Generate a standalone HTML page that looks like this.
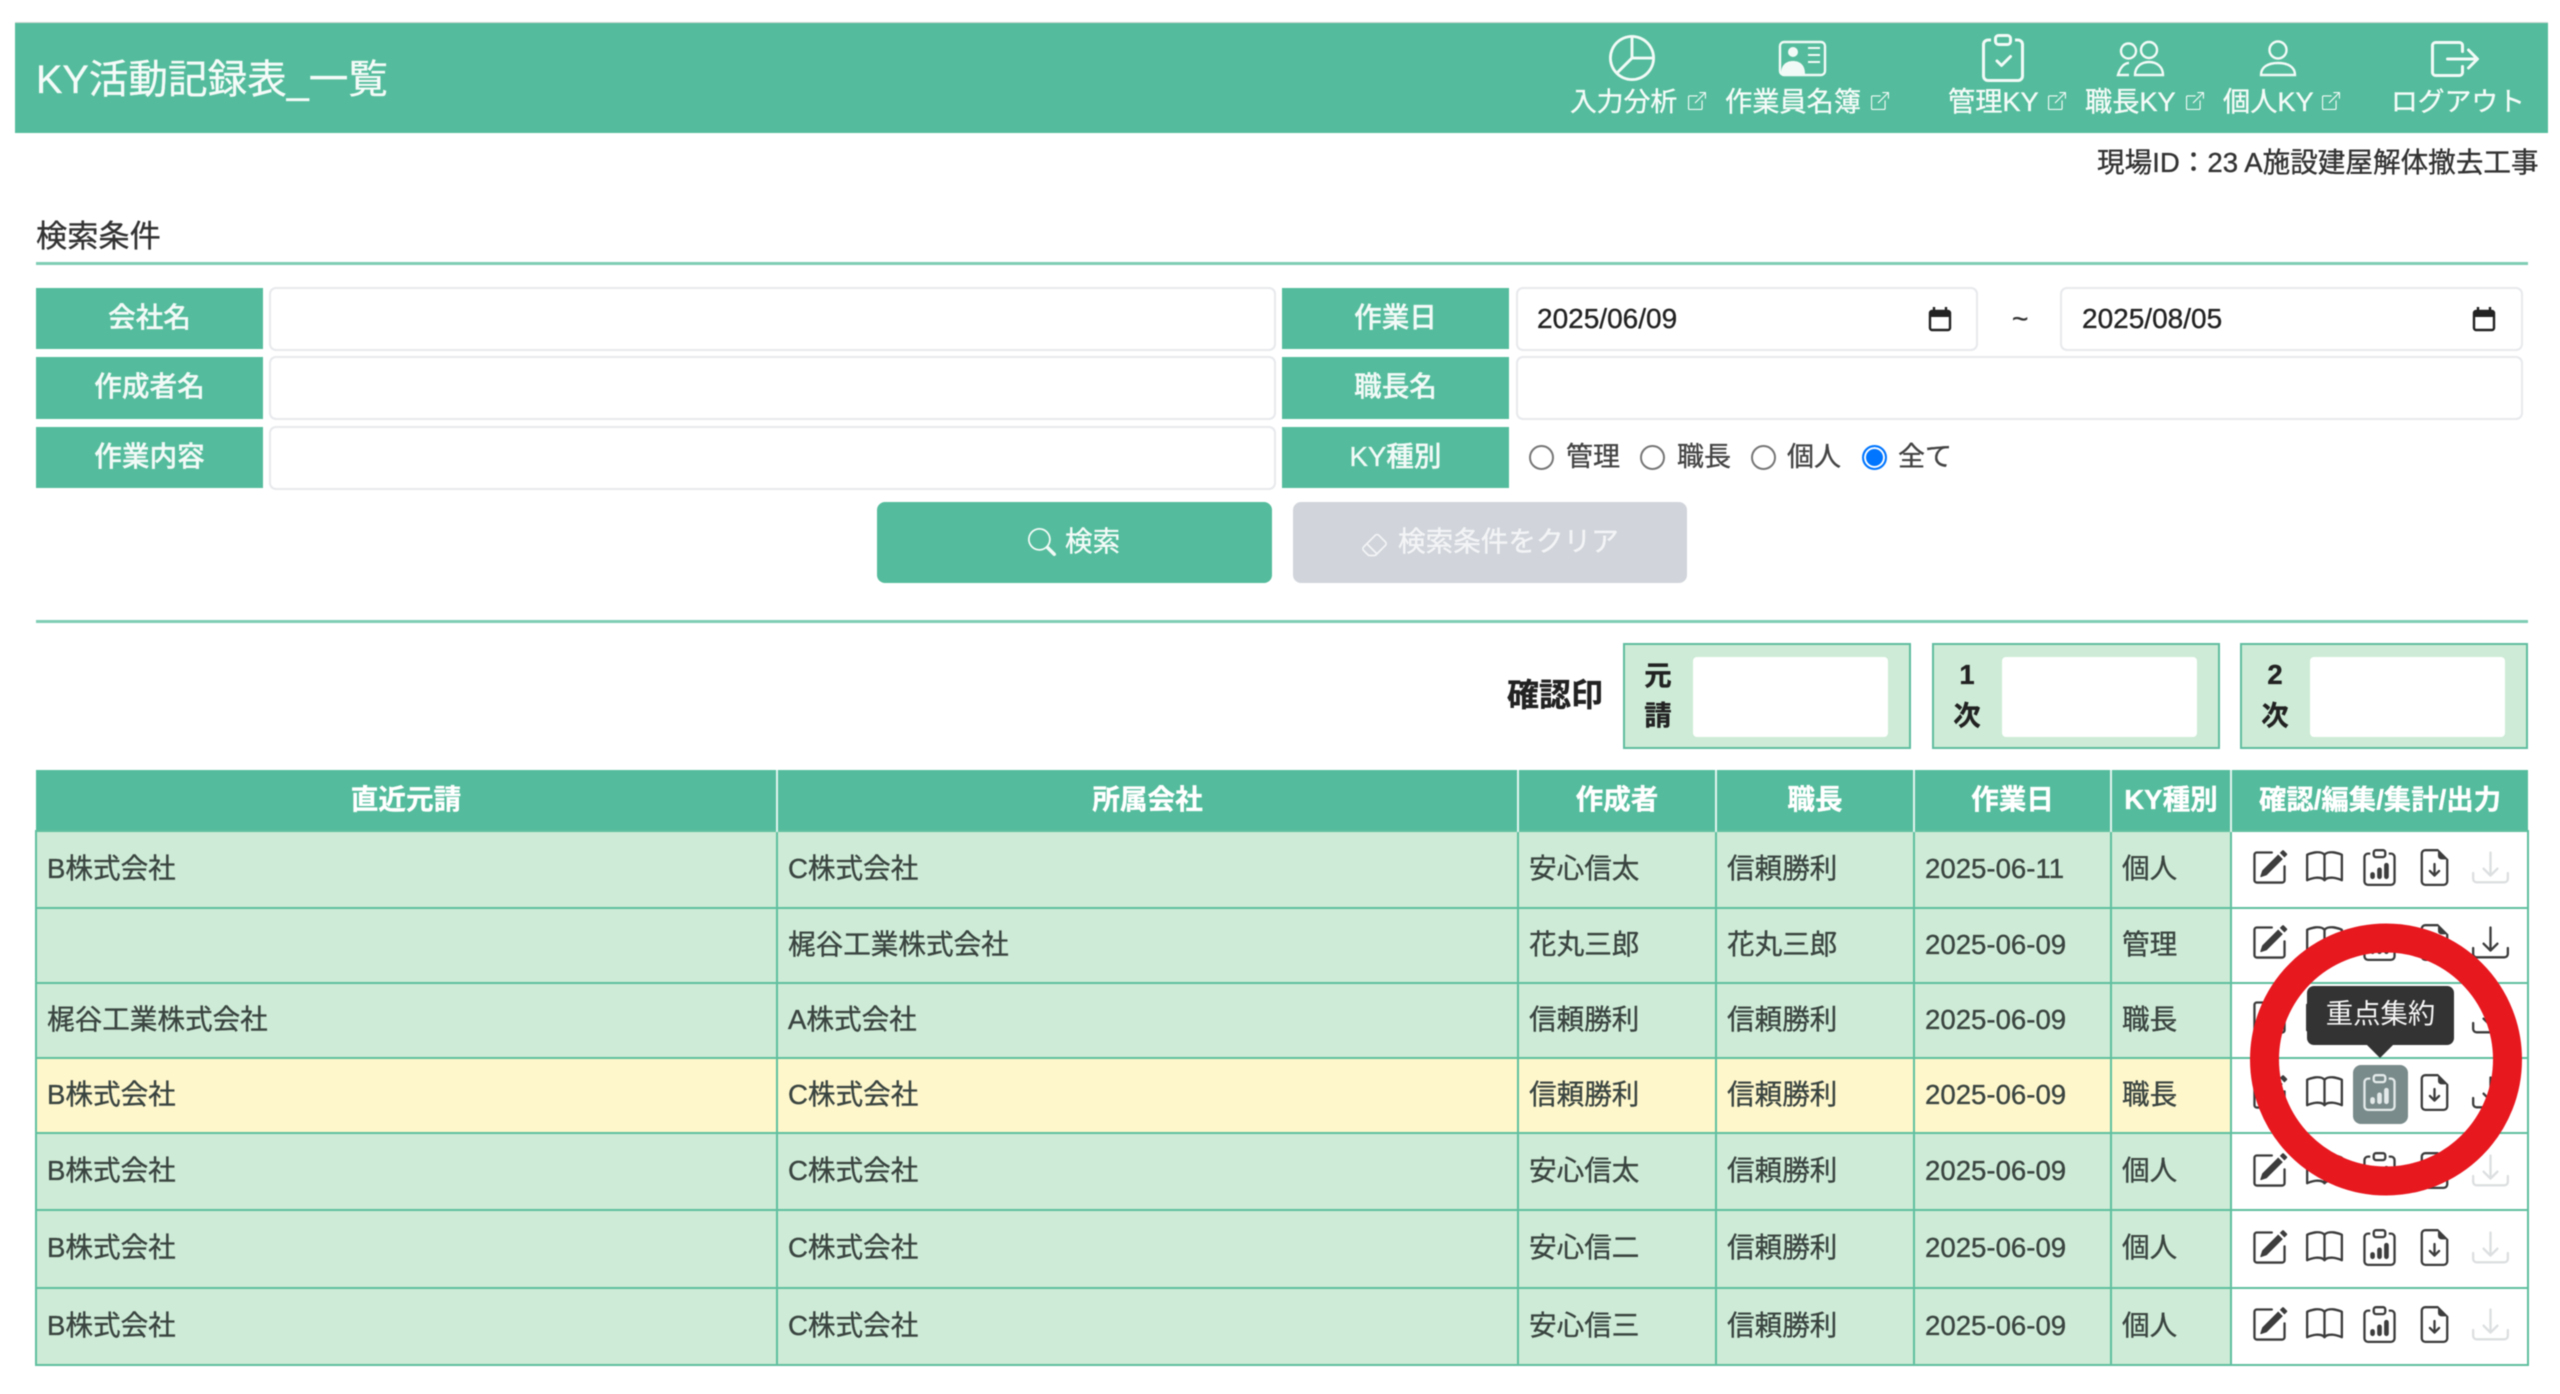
<!DOCTYPE html>
<html lang="ja"><head><meta charset="utf-8"><title>KY活動記録表_一覧</title>
<style>
html,body{margin:0;padding:0;background:#fff}
#p{position:relative;width:2560px;height:1394px;overflow:hidden;background:#fff;font-family:"Liberation Sans","Noto Sans CJK JP",sans-serif;font-size:27.6px;color:#333;-webkit-text-stroke:.35px currentColor;filter:blur(.4px)}
.a{position:absolute}
.t{position:absolute;white-space:nowrap;line-height:40px;height:40px}
.w{color:#f4fbf8}
.l{position:absolute;background:#54bc9c;color:#f2faf7;text-align:center;width:227px;height:61px;line-height:59px;font-weight:500}
.i{position:absolute;box-sizing:border-box;background:#fff;border:2.5px solid #e7e9ec;border-radius:7px}
.hr{position:absolute;left:36px;width:2492px;height:3px;background:#7fcdb5}
.r{position:absolute;box-sizing:border-box;width:25px;height:25px;border:2px solid #767676;border-radius:50%;background:#fff;top:445px}
.c{position:absolute;box-sizing:border-box;top:643px;width:288px;height:106px;background:#cdebd6;border:2px solid #5fbd9f}
.c i{position:absolute;left:68px;top:12px;width:195px;height:80px;background:#fff;border-radius:4px}
.c b{position:absolute;left:16px;width:34px;text-align:center;font-size:27.4px;line-height:40px;color:#222}
table{position:absolute;left:35px;top:770px;border-collapse:collapse;table-layout:fixed;width:2492px;line-height:40px}
th{background:#54bc9c;color:#fff;font-weight:700;padding:0;border:none;border-right:2px solid #e2f4ee;height:60px;text-align:center}
th:last-child{border-right:none}
td{background:#cdebd6;border:2px solid #5fbf9f;padding:0 0 2px 10px;color:#3a4440;white-space:nowrap}
tr.y td{background:#fef7cc}
td.o,tr.y td.o{background:#fff}
</style></head><body><div id="p">

<div class="a" style="left:15px;top:23px;width:2533px;height:110px;background:#54bc9c;box-shadow:0 -1px 0 #cfd8d4"></div>
<div class="t w" style="left:36px;top:60px;font-size:39.6px">KY活動記録表_一覧</div>

<div class="t w" style="left:1570px;top:82px;font-size:26.8px">入力分析</div>
<div class="t w" style="left:1725px;top:82px;font-size:27.2px">作業員名簿</div>
<div class="t w" style="left:1948px;top:82px;font-size:27.2px">管理KY</div>
<div class="t w" style="left:2085px;top:82px;font-size:27.2px">職長KY</div>
<div class="t w" style="left:2223px;top:82px;font-size:27.2px">個人KY</div>
<div class="t w" style="left:2391px;top:82px;font-size:26.8px">ログアウト</div>

<div class="t" style="left:2097px;top:143px;color:#333;font-size:27.6px">現場ID：23 A施設建屋解体撤去工事</div>

<div class="t" style="left:36px;top:217px;font-size:31.2px;color:#333">検索条件</div>
<div class="hr" style="top:262px"></div>

<div class="l" style="left:36px;top:288px">会社名</div>
<div class="l" style="left:36px;top:357px;height:62px">作成者名</div>
<div class="l" style="left:36px;top:427px">作業内容</div>
<div class="i" style="left:269px;top:287px;width:1007px;height:64px"></div>
<div class="i" style="left:269px;top:356px;width:1007px;height:64px"></div>
<div class="i" style="left:269px;top:426px;width:1007px;height:64px"></div>

<div class="l" style="left:1282px;top:288px">作業日</div>
<div class="l" style="left:1282px;top:357px;height:62px">職長名</div>
<div class="l" style="left:1282px;top:427px">KY種別</div>
<div class="i" style="left:1516px;top:287px;width:462px;height:64px"></div>
<div class="t" style="left:1537px;top:299px;font-size:28px;color:#222">2025/06/09</div>
<div class="t" style="left:2012px;top:299px;font-size:28px;color:#333">~</div>
<div class="i" style="left:2060px;top:287px;width:463px;height:64px"></div>
<div class="t" style="left:2082px;top:299px;font-size:28px;color:#222">2025/08/05</div>
<div class="i" style="left:1516px;top:356px;width:1007px;height:64px"></div>

<div class="r" style="left:1529px"></div><div class="t" style="left:1566px;top:437px;font-size:27px;color:#444">管理</div>
<div class="r" style="left:1640px"></div><div class="t" style="left:1677px;top:437px;font-size:27px;color:#444">職長</div>
<div class="r" style="left:1751px"></div><div class="t" style="left:1787px;top:437px;font-size:27px;color:#444">個人</div>
<div class="r" style="left:1862px;border-color:#0075ff;box-shadow:inset 0 0 0 2px #fff;background:#0075ff"></div><div class="t" style="left:1898px;top:437px;font-size:27px;color:#444">全て</div>

<div class="a" style="left:877px;top:502px;width:395px;height:81px;background:#54bc9c;border-radius:8px"></div>
<div class="t w" style="left:1065px;top:522px;font-size:27.6px">検索</div>
<div class="a" style="left:1293px;top:502px;width:394px;height:81px;background:#d1d5db;border-radius:8px"></div>
<div class="t" style="left:1398px;top:522px;font-size:27.6px;color:#f3f4f6">検索条件をクリア</div>

<div class="hr" style="top:620px"></div>

<div class="t" style="left:1507px;top:675px;font-size:32px;font-weight:700;color:#222">確認印</div>
<div class="c" style="left:1623px"><i></i><b style="top:11px">元</b><b style="top:51px">請</b></div>
<div class="c" style="left:1932px"><i></i><b style="top:10px">1</b><b style="top:51px">次</b></div>
<div class="c" style="left:2240px"><i></i><b style="top:10px">2</b><b style="top:51px">次</b></div>

<table>
<colgroup><col style="width:741px"><col style="width:741px"><col style="width:198px"><col style="width:198px"><col style="width:197px"><col style="width:120px"><col style="width:297px"></colgroup>
<tr><th>直近元請</th><th>所属会社</th><th>作成者</th><th>職長</th><th>作業日</th><th>KY種別</th><th style="font-size:27.4px">確認/編集/集計/出力</th></tr>
<tr style="height:77px"><td>B株式会社</td><td>C株式会社</td><td>安心信太</td><td>信頼勝利</td><td>2025-06-11</td><td>個人</td><td class="o"></td></tr>
<tr style="height:75px"><td></td><td>梶谷工業株式会社</td><td>花丸三郎</td><td>花丸三郎</td><td>2025-06-09</td><td>管理</td><td class="o"></td></tr>
<tr style="height:75px"><td>梶谷工業株式会社</td><td>A株式会社</td><td>信頼勝利</td><td>信頼勝利</td><td>2025-06-09</td><td>職長</td><td class="o"></td></tr>
<tr class="y" style="height:75px"><td>B株式会社</td><td>C株式会社</td><td>信頼勝利</td><td>信頼勝利</td><td>2025-06-09</td><td>職長</td><td class="o"></td></tr>
<tr style="height:77px"><td>B株式会社</td><td>C株式会社</td><td>安心信太</td><td>信頼勝利</td><td>2025-06-09</td><td>個人</td><td class="o"></td></tr>
<tr style="height:78px"><td>B株式会社</td><td>C株式会社</td><td>安心信二</td><td>信頼勝利</td><td>2025-06-09</td><td>個人</td><td class="o"></td></tr>
<tr style="height:77px"><td>B株式会社</td><td>C株式会社</td><td>安心信三</td><td>信頼勝利</td><td>2025-06-09</td><td>個人</td><td class="o"></td></tr>
</table>

<svg class="a" style="left:0;top:0" width="2560" height="1394" viewBox="0 0 2560 1394" xmlns="http://www.w3.org/2000/svg">
<defs>
<symbol id="edit" viewBox="0 0 16 16"><path d="M15.502 1.94a.5.5 0 0 1 0 .706L14.459 3.69l-2-2L13.502.646a.5.5 0 0 1 .707 0l1.293 1.293zm-1.75 2.456-2-2L4.939 9.21a.5.5 0 0 0-.121.196l-.805 2.414a.25.25 0 0 0 .316.316l2.414-.805a.5.5 0 0 0 .196-.12l6.813-6.814z"/><path d="M1 13.5A1.5 1.5 0 0 0 2.5 15h11a1.5 1.5 0 0 0 1.5-1.5v-6a.5.5 0 0 0-1 0v6a.5.5 0 0 1-.5.5h-11a.5.5 0 0 1-.5-.5v-11a.5.5 0 0 1 .5-.5H9a.5.5 0 0 0 0-1H2.5A1.5 1.5 0 0 0 1 2.5v11z"/></symbol>
<symbol id="book" viewBox="0 0 16 16"><path d="M1 2.828c.885-.37 2.154-.769 3.388-.893 1.33-.134 2.458.063 3.112.752v9.746c-.935-.53-2.12-.603-3.213-.493-1.18.12-2.37.461-3.287.811V2.828zm7.5-.141c.654-.689 1.782-.886 3.112-.752 1.234.124 2.503.523 3.388.893v9.923c-.918-.35-2.107-.692-3.287-.81-1.094-.111-2.278-.039-3.213.492V2.687zM8 1.783C7.015.936 5.587.81 4.287.94c-1.514.153-3.042.672-3.994 1.105A.5.5 0 0 0 0 2.5v11a.5.5 0 0 0 .707.455c.882-.4 2.303-.881 3.68-1.02 1.409-.142 2.59.087 3.223.877a.5.5 0 0 0 .78 0c.633-.79 1.814-1.019 3.222-.877 1.378.139 2.8.62 3.681 1.02A.5.5 0 0 0 16 13.5v-11a.5.5 0 0 0-.293-.455c-.952-.433-2.48-.952-3.994-1.105C10.413.809 8.985.936 8 1.783z"/></symbol>
<symbol id="clipb" viewBox="0 0 16 16"><path d="M4 1.5H3a2 2 0 0 0-2 2V14a2 2 0 0 0 2 2h10a2 2 0 0 0 2-2V3.5a2 2 0 0 0-2-2h-1v1h1a1 1 0 0 1 1 1V14a1 1 0 0 1-1 1H3a1 1 0 0 1-1-1V3.5a1 1 0 0 1 1-1h1v-1z"/><path d="M9.5 1a.5.5 0 0 1 .5.5v1a.5.5 0 0 1-.5.5h-3a.5.5 0 0 1-.5-.5v-1a.5.5 0 0 1 .5-.5h3zm-3-1A1.5 1.5 0 0 0 5 1.5v1A1.5 1.5 0 0 0 6.5 4h3A1.5 1.5 0 0 0 11 2.5v-1A1.5 1.5 0 0 0 9.5 0h-3z"/></symbol>
<symbol id="data" viewBox="0 0 16 16"><use href="#clipb"/><path d="M4 11a1 1 0 1 1 2 0v1a1 1 0 1 1-2 0v-1zm6-4a1 1 0 1 1 2 0v5a1 1 0 1 1-2 0V7zM7 9a1 1 0 0 1 2 0v3a1 1 0 1 1-2 0V9z"/></symbol>
<symbol id="file" viewBox="0 0 16 16"><path d="M8.5 6.5a.5.5 0 0 0-1 0v3.793L6.354 9.146a.5.5 0 1 0-.708.708l2 2a.5.5 0 0 0 .708 0l2-2a.5.5 0 0 0-.708-.708L8.5 10.293V6.5z"/><path d="M14 14V4.5L9.5 0H4a2 2 0 0 0-2 2v12a2 2 0 0 0 2 2h8a2 2 0 0 0 2-2zM9.5 3A1.5 1.5 0 0 0 11 4.5h2V14a1 1 0 0 1-1 1H4a1 1 0 0 1-1-1V2a1 1 0 0 1 1-1h5.5v2z"/></symbol>
<symbol id="dl" viewBox="0 0 16 16"><path d="M.5 9.9a.5.5 0 0 1 .5.5v2.5a1 1 0 0 0 1 1h12a1 1 0 0 0 1-1v-2.5a.5.5 0 0 1 1 0v2.5a2 2 0 0 1-2 2H2a2 2 0 0 1-2-2v-2.5a.5.5 0 0 1 .5-.5z"/><path d="M7.646 11.854a.5.5 0 0 0 .708 0l3-3a.5.5 0 0 0-.708-.708L8.5 10.293V1.5a.5.5 0 0 0-1 0v8.793L5.354 8.146a.5.5 0 1 0-.708.708l3 3z"/></symbol>
<symbol id="ext" viewBox="0 0 16 16"><path d="M8.636 3.5a.5.5 0 0 0-.5-.5H1.5A1.5 1.5 0 0 0 0 4.5v10A1.5 1.5 0 0 0 1.5 16h10a1.5 1.5 0 0 0 1.5-1.5V7.864a.5.5 0 0 0-1 0V14.5a.5.5 0 0 1-.5.5h-10a.5.5 0 0 1-.5-.5v-10a.5.5 0 0 1 .5-.5h6.636a.5.5 0 0 0 .5-.5z"/><path d="M16 .5a.5.5 0 0 0-.5-.5h-5a.5.5 0 0 0 0 1h3.793L6.146 9.146a.5.5 0 1 0 .708.708L15 1.707V5.5a.5.5 0 0 0 1 0v-5z"/></symbol>
</defs>

<!-- nav icons -->
<g fill="#f2faf7">
<svg x="1609" y="35" width="46" height="46" viewBox="0 0 16 16"><path d="M7.5 1.018a7 7 0 0 0-4.79 11.566L7.5 7.793V1.018zm1 0V7.5h6.482A7 7 0 0 0 8.5 1.018zM14.982 8.5H8.207l-4.79 4.79A7 7 0 0 0 14.982 8.5zM0 8a8 8 0 1 1 16 0A8 8 0 0 1 0 8z"/></svg>
<rect x="1780" y="42" width="45" height="33" rx="4" fill="none" stroke="#f2faf7" stroke-width="2.4"/>
<circle cx="1793" cy="52" r="5"/><path d="M1781 74c0-9 5-13 12-13s12 4 12 13z"/>
<path d="M1808 48h12M1808 55h12M1808 62h12" stroke="#f2faf7" stroke-width="2" fill="none"/>
<svg x="1979" y="34" width="48" height="48" viewBox="0 0 16 16"><use href="#clipb"/><path d="M10.854 7.146a.5.5 0 0 1 0 .708l-3 3a.5.5 0 0 1-.708 0l-1.5-1.5a.5.5 0 1 1 .708-.708L7.5 9.793l2.646-2.647a.5.5 0 0 1 .708 0z"/></svg>
<g fill="none" stroke="#f2faf7" stroke-width="2.4">
<circle cx="2128.5" cy="51" r="7.5"/><circle cx="2149" cy="50" r="8"/>
<path d="M2135 75c0-8 6-13 14-13s14 5 14 13z"/><path d="M2129 63c-5 0-9 5-11 12h11"/>
<circle cx="2278" cy="50" r="8.5"/><path d="M2261 75c0-8 7-12 17-12s17 4 17 12z"/>
</g>
<svg x="2431" y="35" width="48" height="48" viewBox="0 0 16 16"><path d="M10 12.5a.5.5 0 0 1-.5.5h-8a.5.5 0 0 1-.5-.5v-9a.5.5 0 0 1 .5-.5h8a.5.5 0 0 1 .5.5v2a.5.5 0 0 0 1 0v-2A1.5 1.5 0 0 0 9.5 2h-8A1.5 1.5 0 0 0 0 3.5v9A1.5 1.5 0 0 0 1.5 14h8a1.5 1.5 0 0 0 1.5-1.5v-2a.5.5 0 0 0-1 0v2z"/><path d="M15.854 8.354a.5.5 0 0 0 0-.708l-3-3a.5.5 0 0 0-.708.708L14.293 7.5H5.5a.5.5 0 0 0 0 1h8.793l-2.147 2.146a.5.5 0 0 0 .708.708l3-3z"/></svg>
<use href="#ext" x="1688" y="92" width="18" height="18"/>
<use href="#ext" x="1871" y="92" width="18" height="18"/>
<use href="#ext" x="2048" y="92" width="18" height="18"/>
<use href="#ext" x="2186" y="92" width="18" height="18"/>
<use href="#ext" x="2322" y="92" width="18" height="18"/>
<svg x="1028" y="528" width="28" height="28" viewBox="0 0 16 16"><path d="M11.742 10.344a6.5 6.5 0 1 0-1.397 1.398h-.001c.03.04.062.078.098.115l3.85 3.85a1 1 0 0 0 1.415-1.414l-3.85-3.85a1.007 1.007 0 0 0-.115-.1zM12 6.5a5.5 5.5 0 1 1-11 0 5.5 5.5 0 0 1 11 0z"/></svg>
<svg x="1361" y="531" width="27" height="27" viewBox="0 0 16 16" fill="#f3f4f6"><path d="M8.086 2.207a2 2 0 0 1 2.828 0l3.879 3.879a2 2 0 0 1 0 2.828l-5.5 5.5A2 2 0 0 1 7.879 15H5.12a2 2 0 0 1-1.414-.586l-2.5-2.5a2 2 0 0 1 0-2.828l6.879-6.879zm2.121.707a1 1 0 0 0-1.414 0L4.16 7.547l5.293 5.293 4.633-4.633a1 1 0 0 0 0-1.414l-3.879-3.879zM8.746 13.547 3.453 8.254 1.914 9.793a1 1 0 0 0 0 1.414l2.5 2.5a1 1 0 0 0 .707.293H7.88a1 1 0 0 0 .707-.293l.16-.16z"/></svg>
</g>

<!-- calendars -->
<g id="cal"><rect x="1930" y="311" width="20" height="19" rx="2" fill="none" stroke="#222" stroke-width="2.4"/><rect x="1930" y="311" width="20" height="6" fill="#222"/><path d="M1934 307v4M1946 307v4" stroke="#222" stroke-width="2.4"/></g>
<g transform="translate(544 0)"><rect x="1930" y="311" width="20" height="19" rx="2" fill="none" stroke="#222" stroke-width="2.4"/><rect x="1930" y="311" width="20" height="6" fill="#222"/><path d="M1934 307v4M1946 307v4" stroke="#222" stroke-width="2.4"/></g>

<!-- row icons -->
<g fill="#3c3c3c">
<use href="#edit" x="2251" y="849" width="37" height="37"/><use href="#book" x="2306" y="849" width="37" height="37"/><use href="#data" x="2361" y="849" width="37" height="37"/><use href="#file" x="2416" y="849" width="37" height="37"/><use href="#dl" x="2472" y="849" width="37" height="37" fill="#dcdfe0"/>
<use href="#edit" x="2251" y="924" width="37" height="37"/><use href="#book" x="2306" y="924" width="37" height="37"/><use href="#data" x="2361" y="924" width="37" height="37"/><use href="#file" x="2416" y="924" width="37" height="37"/><use href="#dl" x="2472" y="924" width="37" height="37"/>
<use href="#edit" x="2251" y="999" width="37" height="37"/><use href="#book" x="2306" y="999" width="37" height="37"/><use href="#dl" x="2472" y="999" width="37" height="37"/>
<use href="#edit" x="2251" y="1074" width="37" height="37"/><use href="#book" x="2306" y="1074" width="37" height="37"/>
<rect x="2353" y="1065" width="55" height="59" rx="8" fill="#7a8b8b"/>
<use href="#data" x="2361" y="1074" width="37" height="37" fill="#e4eaea"/>
<use href="#file" x="2416" y="1074" width="37" height="37"/><use href="#dl" x="2472" y="1074" width="37" height="37"/>
<use href="#edit" x="2251" y="1152" width="37" height="37"/><use href="#book" x="2306" y="1152" width="37" height="37"/><use href="#data" x="2361" y="1152" width="37" height="37"/><use href="#file" x="2416" y="1152" width="37" height="37"/><use href="#dl" x="2472" y="1152" width="37" height="37" fill="#dcdfe0"/>
<use href="#edit" x="2251" y="1229" width="37" height="37"/><use href="#book" x="2306" y="1229" width="37" height="37"/><use href="#data" x="2361" y="1229" width="37" height="37"/><use href="#file" x="2416" y="1229" width="37" height="37"/><use href="#dl" x="2472" y="1229" width="37" height="37" fill="#dcdfe0"/>
<use href="#edit" x="2251" y="1306" width="37" height="37"/><use href="#book" x="2306" y="1306" width="37" height="37"/><use href="#data" x="2361" y="1306" width="37" height="37"/><use href="#file" x="2416" y="1306" width="37" height="37"/><use href="#dl" x="2472" y="1306" width="37" height="37" fill="#dcdfe0"/>
</g>

<!-- tooltip -->
<rect x="2307" y="986" width="147" height="59" rx="7" fill="#333"/>
<path d="M2366 1044h28l-14 14z" fill="#333"/>
<text x="2380.5" y="1023" text-anchor="middle" font-size="27.4" fill="#f5f5f5" font-family="'Liberation Sans','Noto Sans CJK JP',sans-serif">重点集約</text>

<!-- red circle -->
<circle cx="2386" cy="1059.5" r="121.5" fill="none" stroke="#e8181f" stroke-width="29"/>
</svg>

</div></body></html>
